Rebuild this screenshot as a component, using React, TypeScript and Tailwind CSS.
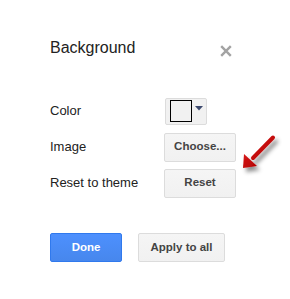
import React from "react";

const grayBtn =
  "flex items-center justify-center rounded-[2px] border border-[#dcdcdc] bg-gradient-to-b from-[#f5f5f5] to-[#f1f1f1] text-[11.5px] font-bold text-[#444]";

export default function App() {
  return (
    <div
      className="relative h-[299px] w-[290px] overflow-hidden bg-white pl-[50px] pt-[38px] text-[#222]"
      style={{ fontFamily: '"Liberation Sans", Arial, sans-serif' }}
    >
      <div className="flex w-[182px] items-start justify-between">
        <div className="text-[16px] leading-[20px]">Background</div>
        <svg width="12" height="12" viewBox="0 0 12 12" className="mt-[7px]">
          <path d="M1.2 1.2 L10.8 10.8 M10.8 1.2 L1.2 10.8" stroke="#a3a3a3" strokeWidth="2.4" />
        </svg>
      </div>

      <div className="mt-[35px] grid grid-cols-[114px_auto] text-[13px]">
        <div className="flex h-[36px] items-center">Color</div>
        <div className="flex h-[36px] items-center">
          <div className="ml-px flex h-[27px] w-[42px] items-center rounded-[2px] border border-[#dcdcdc] bg-[#f1f1f1] pl-[4px]">
            <div className="h-[22px] w-[22px] border border-black bg-[#f1f1f1]" />
            <svg width="8" height="5" viewBox="0 0 8 5" className="ml-[3px] mb-[6px]">
              <path d="M0 0 L8 0 L4 4.5 Z" fill="#3d4a6e" />
            </svg>
          </div>
        </div>

        <div className="flex h-[36px] items-center">Image</div>
        <div className="flex h-[36px] items-center">
          <div className={`${grayBtn} h-[29px] w-[72px]`}>Choose...</div>
        </div>

        <div className="flex h-[36px] items-center">Reset to theme</div>
        <div className="flex h-[36px] items-center">
          <div className={`${grayBtn} h-[29px] w-[72px]`}>Reset</div>
        </div>
      </div>

      <div className="mt-[32px] flex gap-[16px]">
        <div className="flex h-[29px] w-[72px] items-center justify-center rounded-[2px] border border-[#3079ed] bg-gradient-to-b from-[#4d90fe] to-[#4787ed] text-[11.5px] font-bold text-white">
          Done
        </div>
        <div className={`${grayBtn} h-[29px] w-[87px]`}>Apply to all</div>
      </div>

      <svg
        width="50"
        height="50"
        viewBox="0 0 50 50"
        className="absolute left-[235px] top-[130px]"
      >
        <defs>
          <filter id="sh" x="-50%" y="-50%" width="200%" height="200%">
            <feDropShadow dx="3" dy="4" stdDeviation="2" floodColor="#000" floodOpacity="0.45" />
          </filter>
          <linearGradient id="rg" x1="0" y1="0" x2="1" y2="1">
            <stop offset="0" stopColor="#d81818" />
            <stop offset="1" stopColor="#b00000" />
          </linearGradient>
        </defs>
        <g filter="url(#sh)">
          <path d="M38 7.5 L18 28" stroke="url(#rg)" strokeWidth="4" strokeLinecap="round" />
          <path d="M8 38 L9 24 L22 36 Z" fill="url(#rg)" />
        </g>
      </svg>
    </div>
  );
}
